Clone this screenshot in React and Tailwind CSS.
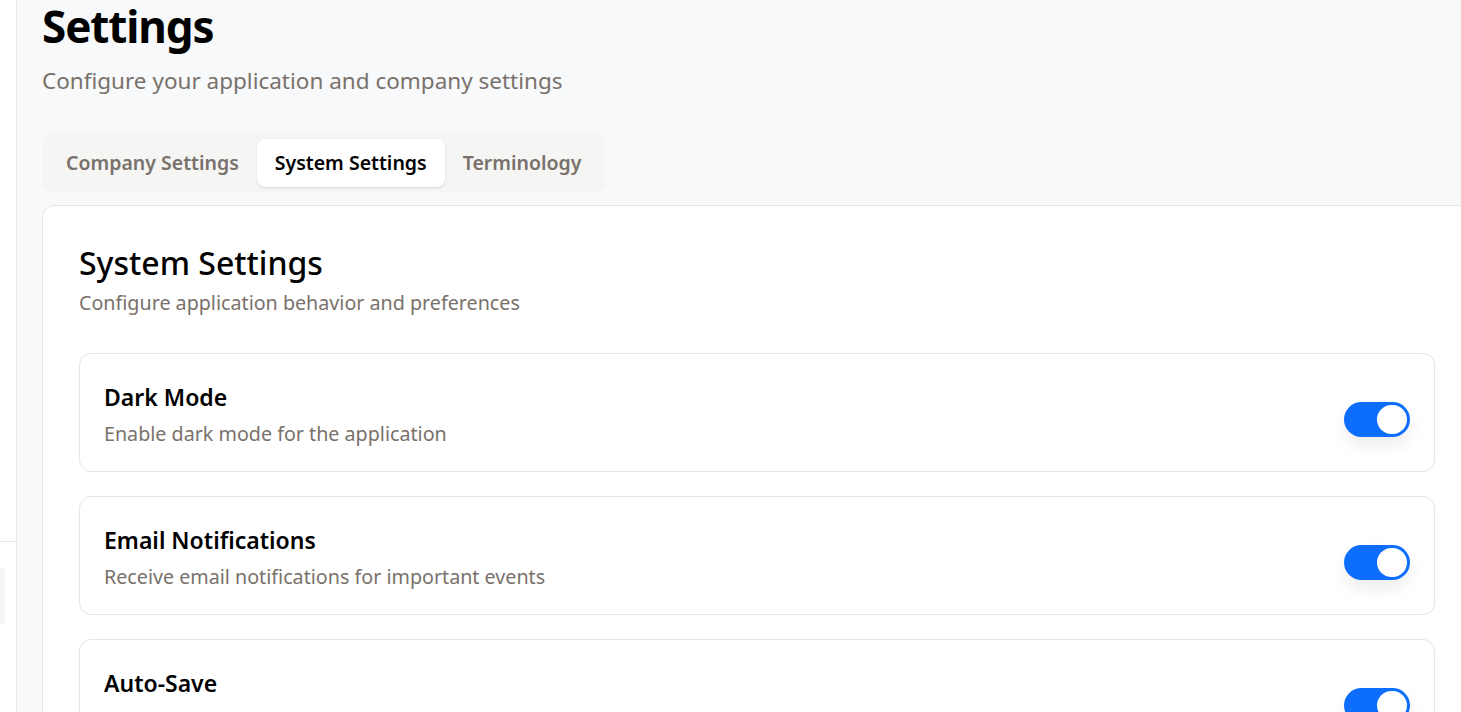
import React, { useState } from 'react';

const initialSettings = [
  { id: 'dark', title: 'Dark Mode', desc: 'Enable dark mode for the application', on: true },
  { id: 'email', title: 'Email Notifications', desc: 'Receive email notifications for important events', on: true },
  { id: 'autosave', title: 'Auto-Save', desc: 'Automatically save changes as you work', on: true }
];

const tabs = ['Company Settings', 'System Settings', 'Terminology'];

const Toggle = ({ on, onClick }) => (
  <button
    onClick={onClick}
    className={`relative mt-[14px] w-[66px] h-[35px] rounded-full shrink-0 shadow-[0_8px_16px_rgba(0,0,0,0.08)] ${on ? 'bg-[#0d6efd]' : 'bg-stone-300'}`}
  >
    <span
      className={`absolute top-[3px] w-[30px] h-[29px] rounded-full bg-white ${on ? 'right-[3px]' : 'left-[3px]'}`}
    />
  </button>
);

const App = () => {
  const [activeTab, setActiveTab] = useState('System Settings');
  const [settings, setSettings] = useState(initialSettings);

  const toggle = (id) => {
    setSettings(settings.map(s => (s.id === id ? { ...s, on: !s.on } : s)));
  };

  return (
    <div className="h-screen overflow-hidden flex bg-[#f8f9fa] font-['Noto_Sans',sans-serif]">
      <aside className="w-[17px] shrink-0 bg-white border-r border-stone-200 flex flex-col">
        <div className="mt-[541px] border-t border-stone-200" />
        <div className="mt-[25px] h-[58px] w-[5px] rounded-r-lg bg-stone-100" />
      </aside>

      <main className="pl-[25px] shrink-0">
        <h1 className="text-[44px] leading-[52px] font-bold text-black tracking-tight">Settings</h1>
        <p className="mt-[13px] text-[22.5px] leading-[32px] text-stone-500">Configure your application and company settings</p>

        <div className="mt-[36px] inline-flex p-[6px] rounded-xl bg-stone-100">
          {tabs.map(tab => (
            <button
              key={tab}
              onClick={() => setActiveTab(tab)}
              className={`h-[48px] px-[18px] rounded-lg text-[19.5px] font-semibold ${activeTab === tab ? 'bg-white text-black shadow-sm' : 'text-stone-500'}`}
            >
              {tab}
            </button>
          ))}
        </div>

        <div className="mt-[12px] w-[1430px] bg-white border border-stone-200 rounded-xl px-9 pt-[37px]">
          <h2 className="text-[32px] leading-[40px] font-medium text-black">System Settings</h2>
          <p className="mt-[6px] text-[19.7px] leading-[28px] text-stone-500">Configure application behavior and preferences</p>

          <div className="mt-[36px] space-y-6">
            {settings.map(s => (
              <div key={s.id} className="h-[119px] border border-stone-200 rounded-xl px-6 flex items-start justify-between">
                <div className="pt-[28px]">
                  <p className="text-[23px] leading-[30px] font-semibold text-black">{s.title}</p>
                  <p className="mt-[8px] text-[19.7px] leading-[28px] text-stone-500">{s.desc}</p>
                </div>
                <div className="self-stretch flex items-center">
                  <Toggle on={s.on} onClick={() => toggle(s.id)} />
                </div>
              </div>
            ))}
          </div>
        </div>
      </main>
    </div>
  );
};

export default App;
